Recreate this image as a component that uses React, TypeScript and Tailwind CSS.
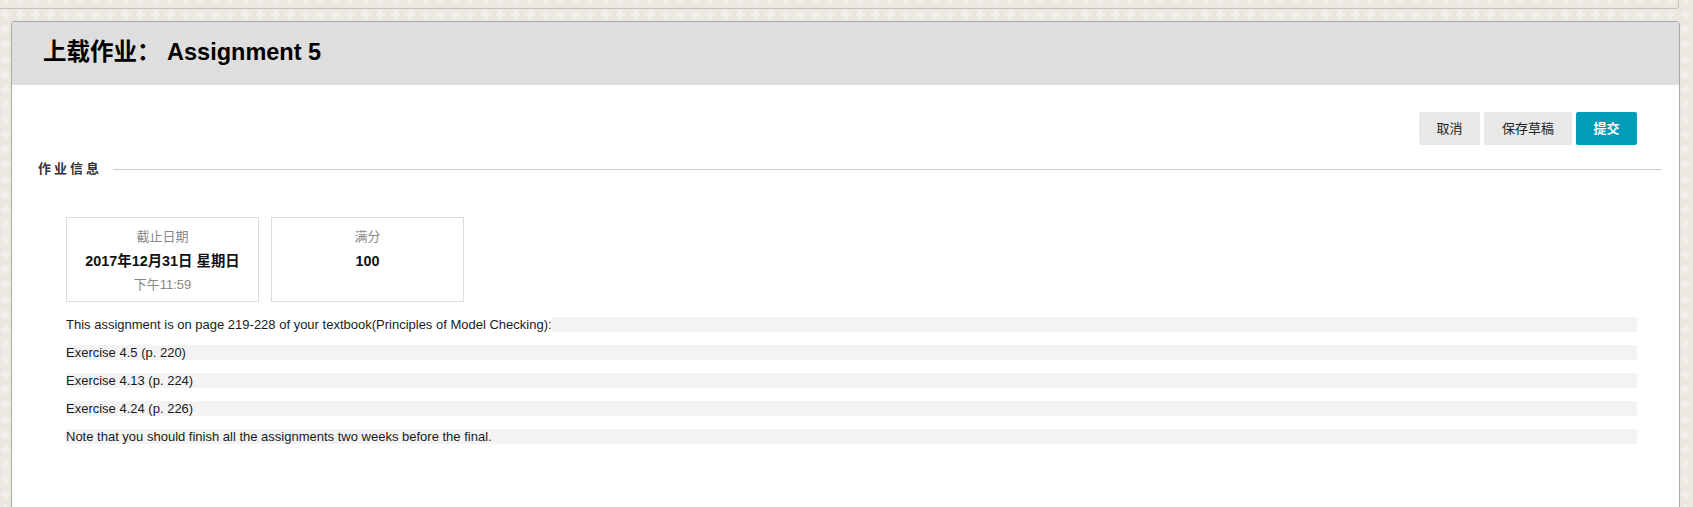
import React from "react";

const font = { fontFamily: '"Liberation Sans", Arial, "Noto Sans CJK SC", sans-serif' };

function InfoCard({ label, value, sub }: { label: string; value: string; sub?: string }) {
  return (
    <div className="w-[193px] h-[85px] border border-[#dcdcdc] bg-white flex flex-col items-center pt-[7px] text-[13px] leading-[24px]">
      <div className="text-[#888888]">{label}</div>
      <div className="font-bold text-[14.4px] text-[#111111]">{value}</div>
      {sub ? <div className="text-[#888888]">{sub}</div> : null}
    </div>
  );
}

export default function App() {
  const rows = [
    "Exercise 4.5 (p. 220)",
    "Exercise 4.13 (p. 224)",
    "Exercise 4.24 (p. 226)",
    "Note that you should finish all the assignments two weeks before the final.",
  ];
  return (
    <div
      className="min-h-[507px] w-full overflow-hidden bg-[#ebe8e1] bg-[image:conic-gradient(at_3px_9px,transparent_75%,#f2f0eb_0),conic-gradient(at_9px_3px,transparent_75%,#f2f0eb_0)] bg-[position:4px_10px,1px_13px] bg-[size:15px_15px]"
      style={font}
    >
      <div className="h-[9px] w-[1679px] border-b border-r border-[#c6c3bc] rounded-br-[3px]" />
      <div className="ml-[11px] mt-[12px] w-[1669px] min-h-[490px] border border-[#a9a9a9] rounded-t-[3px] bg-white">
        <div className="h-[63px] bg-[#dedede] flex items-center pl-[31px] pb-[1px]">
          <h1 className="text-[23.5px] font-bold text-[#000000] leading-none">上载作业： Assignment 5</h1>
        </div>

        <div className="flex justify-end gap-[4px] pt-[27px] pr-[42px]">
          <button className="w-[61px] h-[33px] rounded-[2px] bg-[#e8e8e8] text-[13px] text-[#222222]">取消</button>
          <button className="w-[88px] h-[33px] rounded-[2px] bg-[#e8e8e8] text-[13px] text-[#222222]">保存草稿</button>
          <button className="w-[61px] h-[33px] rounded-[2px] bg-[#009cb8] text-[13px] font-bold text-white">提交</button>
        </div>

        <div className="flex items-center mt-[14px] h-[20px] pl-[26px] pr-[18px]">
          <div className="text-[13px] font-bold tracking-[3px] text-[#333333]">作业信息</div>
          <div className="flex-1 ml-[11px] h-px bg-[#cccccc]" />
        </div>

        <div className="flex gap-[12px] mt-[38px] pl-[54px]">
          <InfoCard label="截止日期" value="2017年12月31日 星期日" sub="下午11:59" />
          <InfoCard label="满分" value="100" />
        </div>

        <div className="flex flex-col gap-[13px] mt-[15px] pl-[54px] pr-[42px] text-[13px] leading-[15px] text-[#1a1a1a]">
          <div className="h-[15px] bg-[#f3f3f3]">
            <span className="bg-white">This assignment is on page 219-228 of your textbook(Principles of Model Checking):</span>
          </div>
          {rows.map((r) => (
            <div key={r} className="h-[15px] bg-[#f3f3f3]">
              {r}
            </div>
          ))}
        </div>
      </div>
    </div>
  );
}
